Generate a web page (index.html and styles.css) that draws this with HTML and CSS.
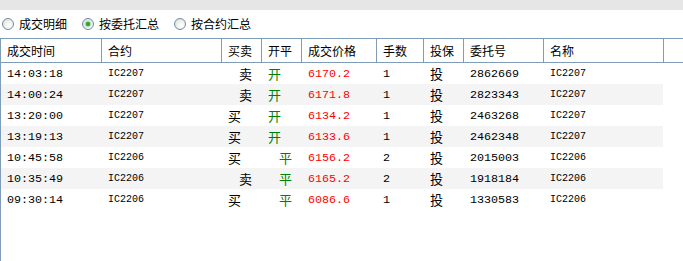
FILE: index.html
```html
<!DOCTYPE html>
<html>
<head>
<meta charset="utf-8">
<link rel="stylesheet" href="styles.css">
</head>
<body>
<div class="topbar"></div>
<div class="radios">
  <label class="opt"><span class="radio"></span><span>成交明细</span></label>
  <label class="opt"><span class="radio on"></span><span>按委托汇总</span></label>
  <label class="opt"><span class="radio"></span><span>按合约汇总</span></label>
</div>
<div class="grid">
  <div class="head">
    <div class="hc">成交时间</div>
    <div class="hc">合约</div>
    <div class="hc">买卖</div>
    <div class="hc">开平</div>
    <div class="hc">成交价格</div>
    <div class="hc">手数</div>
    <div class="hc">投保</div>
    <div class="hc">委托号</div>
    <div class="hc">名称</div>
  </div>
  <div class="row"><div class="c num">14:03:18</div><div class="c code">IC2207</div><div class="c cn ind">卖</div><div class="c cn green">开</div><div class="c num red">6170.2</div><div class="c num">1</div><div class="c cn">投</div><div class="c num">2862669</div><div class="c code">IC2207</div></div>
  <div class="row alt"><div class="c num">14:00:24</div><div class="c code">IC2207</div><div class="c cn ind">卖</div><div class="c cn green">开</div><div class="c num red">6171.8</div><div class="c num">1</div><div class="c cn">投</div><div class="c num">2823343</div><div class="c code">IC2207</div></div>
  <div class="row"><div class="c num">13:20:00</div><div class="c code">IC2207</div><div class="c cn">买</div><div class="c cn green">开</div><div class="c num red">6134.2</div><div class="c num">1</div><div class="c cn">投</div><div class="c num">2463268</div><div class="c code">IC2207</div></div>
  <div class="row alt"><div class="c num">13:19:13</div><div class="c code">IC2207</div><div class="c cn">买</div><div class="c cn green">开</div><div class="c num red">6133.6</div><div class="c num">1</div><div class="c cn">投</div><div class="c num">2462348</div><div class="c code">IC2207</div></div>
  <div class="row"><div class="c num">10:45:58</div><div class="c code">IC2206</div><div class="c cn">买</div><div class="c cn green ind">平</div><div class="c num red">6156.2</div><div class="c num">2</div><div class="c cn">投</div><div class="c num">2015003</div><div class="c code">IC2206</div></div>
  <div class="row alt"><div class="c num">10:35:49</div><div class="c code">IC2206</div><div class="c cn ind">卖</div><div class="c cn green ind">平</div><div class="c num red">6165.2</div><div class="c num">2</div><div class="c cn">投</div><div class="c num">1918184</div><div class="c code">IC2206</div></div>
  <div class="row"><div class="c num">09:30:14</div><div class="c code">IC2206</div><div class="c cn">买</div><div class="c cn green ind">平</div><div class="c num red">6086.6</div><div class="c num">1</div><div class="c cn">投</div><div class="c num">1330583</div><div class="c code">IC2206</div></div>
</div>
</body>
</html>
```
FILE: styles.css
```css
html, body {
  margin: 0;
  padding: 0;
  background: #ffffff;
  overflow: hidden;
}
body {
  width: 683px;
  height: 261px;
  font-family: "Noto Sans CJK SC", "Noto Sans", sans-serif;
  font-size: 12px;
  color: #000;
}
.topbar {
  height: 10px;
  background: #e6e6e6;
}
.radios {
  height: 28px;
  display: flex;
  align-items: center;
  padding-left: 2px;
  gap: 15px;
}
.opt {
  display: flex;
  align-items: center;
  gap: 5px;
  line-height: 14px;
}
.radio {
  width: 12px;
  height: 12px;
  box-sizing: border-box;
  border-radius: 50%;
  border: 1px solid #6f8ca8;
  background: radial-gradient(circle at 65% 65%, #ffffff 0%, #f2f2ee 40%, #d9d9d2 100%);
  display: flex;
  align-items: center;
  justify-content: center;
}
.radio.on::after {
  content: "";
  width: 4px;
  height: 4px;
  border-radius: 50%;
  background: #2aa12a;
  box-shadow: 0 0 1px 1px #8fd48f;
}
.grid {
  border-left: 1px solid #7f9db9;
  height: 223px;
}
.head {
  display: grid;
  grid-template-columns: 101px 120px 40px 40px 75px 47px 40px 80px 120px;
  border-top: 1px solid #7f9db9;
  border-bottom: 1px solid #7f9db9;
  height: 23px;
  box-sizing: content-box;
}
.hc {
  box-sizing: border-box;
  border-right: 1px solid #7f9db9;
  padding-left: 6px;
  line-height: 23px;
  white-space: nowrap;
}
.row {
  display: grid;
  grid-template-columns: 101px 120px 40px 40px 75px 47px 40px 80px 120px;
  width: 662px;
  height: 21px;
  align-items: center;
}
.row.alt {
  background: #f4f4f4;
}
.c {
  padding-left: 6px;
  white-space: nowrap;
}
.num {
  font-family: "Liberation Mono", "DejaVu Sans Mono", monospace;
  font-size: 11.7px;
}
.code {
  font-family: "Liberation Mono", "DejaVu Sans Mono", monospace;
  font-size: 10px;
}
.cn {
  font-size: 13px;
}
.ind {
  padding-left: 17px;
}
.red {
  color: #ff0000;
}
.green {
  color: #008000;
}
```
